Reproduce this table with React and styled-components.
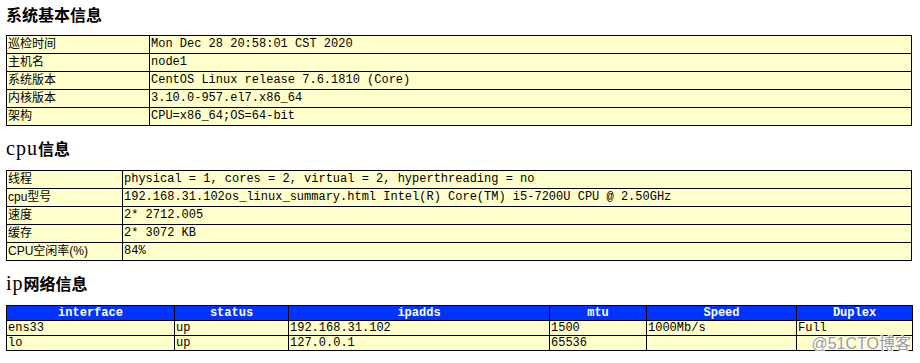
import React from "react";
import styled, { createGlobalStyle } from "styled-components";

const Global = createGlobalStyle`
  html, body { margin: 0; padding: 0; background: #fff; }
  body { font-family: "Liberation Sans", "Noto Sans CJK SC", sans-serif; color: #000; }
`;

const Page = styled.div`
  position: relative;
  padding: 3px 8px 0 6px;
  width: 920px;
  height: 363px;
  box-sizing: border-box;
`;

const Heading = styled.h3`
  margin: 11px 0;
  height: 22px;
  line-height: 22px;
  font-size: 16px;
  font-weight: bold;
  font-family: "Noto Sans CJK SC", "Liberation Sans", sans-serif;
  &:first-child {
    margin-top: 0;
    margin-bottom: 10px;
  }
`;

const Latin = styled.span`
  font-family: "Liberation Serif", serif;
  font-weight: normal;
  font-size: 20px;
  letter-spacing: 1px;
`;

const Table = styled.table`
  width: 100%;
  border-collapse: collapse;
  background: #ffffcc;
  font-size: 12px;
  table-layout: fixed;
`;

const Col = styled.col`
  width: ${(p) => p.$w}px;
`;

const Label = styled.td`
  border: 1px solid #000;
  padding: 0 1px;
  height: 17px;
  line-height: 17px;
  font-family: "Liberation Sans", "Noto Sans CJK SC", sans-serif;
  white-space: nowrap;
  overflow: hidden;
`;

const Value = styled.td`
  border: 1px solid #000;
  padding: 0 1px;
  height: 17px;
  line-height: 17px;
  font-family: "Liberation Mono", "Noto Sans CJK SC", monospace;
  white-space: pre;
  overflow: hidden;
`;

const Head = styled.th`
  border: 1px solid #000;
  padding: 0 1px;
  height: 14px;
  line-height: 14px;
  background: #0033ff;
  color: #fff;
  font-weight: bold;
  text-align: center;
  font-family: "Liberation Mono", monospace;
`;

const Cell = styled.td`
  border: 1px solid #000;
  padding: 0 1px;
  height: 14px;
  line-height: 14px;
  font-family: "Liberation Mono", monospace;
  white-space: pre;
  overflow: hidden;
`;

const Watermark = styled.div`
  position: absolute;
  right: 9px;
  top: 334px;
  font-family: "Liberation Sans", "Noto Sans CJK SC", sans-serif;
  font-size: 16px;
  line-height: 20px;
  color: #9a9a9a;
  text-shadow: 0 0 1px #fff, 0 0 1px #fff, 1px 1px 0 #fff, -1px -1px 0 #fff;
`;

const sys = [
  ["巡检时间", "Mon Dec 28 20:58:01 CST 2020"],
  ["主机名", "node1"],
  ["系统版本", "CentOS Linux release 7.6.1810 (Core)"],
  ["内核版本", "3.10.0-957.el7.x86_64"],
  ["架构", "CPU=x86_64;OS=64-bit"],
];

const cpu = [
  ["线程", "physical = 1, cores = 2, virtual = 2, hyperthreading = no"],
  ["cpu型号", "192.168.31.102os_linux_summary.html Intel(R) Core(TM) i5-7200U CPU @ 2.50GHz"],
  ["速度", "2* 2712.005"],
  ["缓存", "2* 3072 KB"],
  ["CPU空闲率(%)", "84%"],
];

const netCols = [
  ["interface", 168],
  ["status", 114],
  ["ipadds", 261],
  ["mtu", 97],
  ["Speed", 150],
  ["Duplex", 116],
];

const net = [
  ["ens33", "up", "192.168.31.102", "1500", "1000Mb/s", "Full"],
  ["lo", "up", "127.0.0.1", "65536", "", ""],
];

function InfoTable({ rows, labelWidth }) {
  return (
    <Table>
      <colgroup>
        <Col $w={labelWidth} />
        <col />
      </colgroup>
      <tbody>
        {rows.map(([k, v]) => (
          <tr key={k}>
            <Label>{k}</Label>
            <Value>{v}</Value>
          </tr>
        ))}
      </tbody>
    </Table>
  );
}

export default function App() {
  return (
    <>
      <Global />
      <Page>
        <Heading>系统基本信息</Heading>
        <InfoTable rows={sys} labelWidth={143} />
        <Heading>
          <Latin>cpu</Latin>信息
        </Heading>
        <InfoTable rows={cpu} labelWidth={116} />
        <Heading>
          <Latin>ip</Latin>网络信息
        </Heading>
        <Table>
          <colgroup>
            {netCols.map(([n, w]) => (
              <Col key={n} $w={w} />
            ))}
          </colgroup>
          <thead>
            <tr>
              {netCols.map(([n]) => (
                <Head key={n}>{n}</Head>
              ))}
            </tr>
          </thead>
          <tbody>
            {net.map((r) => (
              <tr key={r[0]}>
                {r.map((c, i) => (
                  <Cell key={i}>{c}</Cell>
                ))}
              </tr>
            ))}
          </tbody>
        </Table>
        <Watermark>@51CTO博客</Watermark>
      </Page>
    </>
  );
}
